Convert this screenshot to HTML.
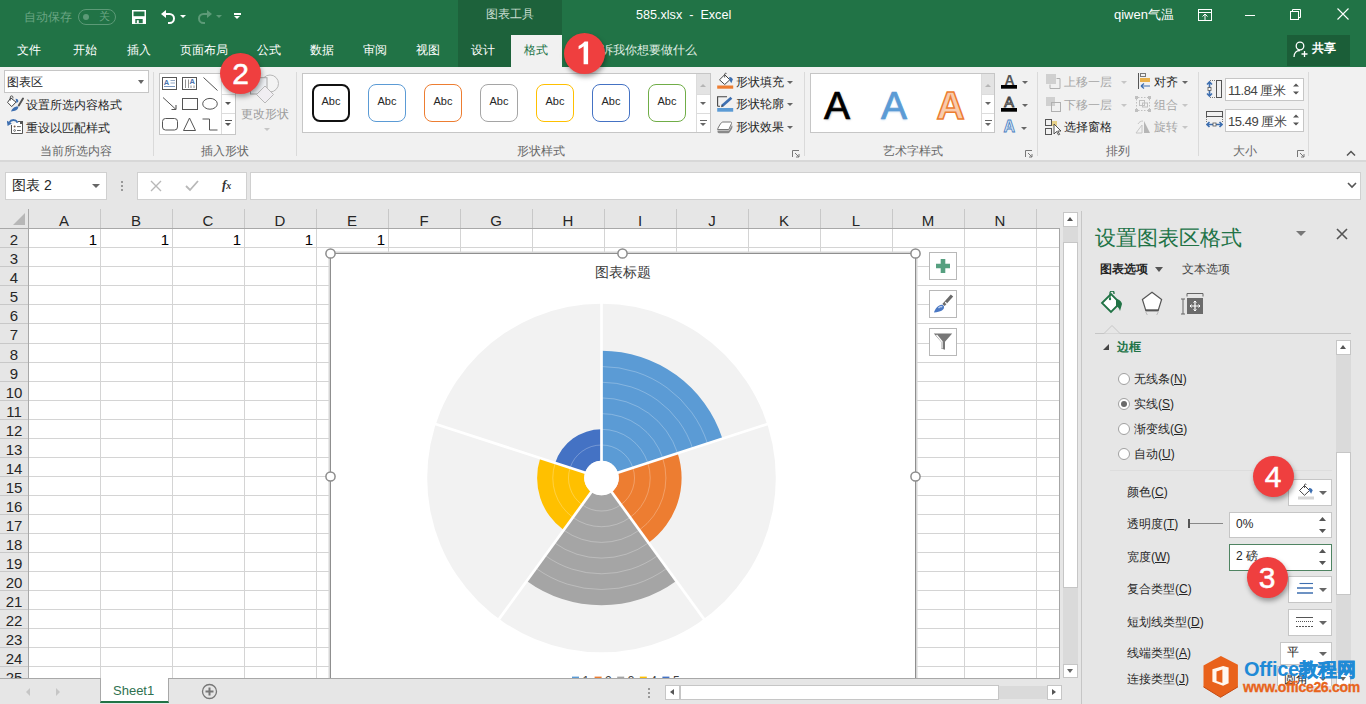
<!DOCTYPE html><html><head><meta charset="utf-8"><style>
*{margin:0;padding:0;box-sizing:border-box}
html,body{width:1366px;height:704px;overflow:hidden;background:#fff;font-family:"Liberation Sans",sans-serif;color:#262626}
.abs{position:absolute}
.t{position:absolute;white-space:nowrap;line-height:1}
#title{left:0;top:0;width:1366px;height:67px;background:#217346}
.tab{position:absolute;top:43px;font-size:12px;color:#fff;line-height:14px}
.rib{position:absolute;left:0;top:67px;width:1366px;height:95px;background:#f1f1f1;border-bottom:2px solid #d8d8d8}
.gl{position:absolute;top:144px;font-size:12px;color:#666;line-height:14px}
.sep{position:absolute;top:72px;width:1px;height:84px;background:#dadada}
.box{position:absolute;background:#fff;border:1px solid #c6c6c6}
.sw{position:absolute;top:84px;width:38px;height:38px;border:1.2px solid #222;border-radius:8px;font-size:11px;line-height:33px;text-align:center;color:#262626}
.rt{position:absolute;font-size:12px;color:#262626;line-height:14px}
.dis{color:#a6a6a6}
.caret{position:absolute;width:0;height:0;border-left:3.5px solid transparent;border-right:3.5px solid transparent;border-top:3.5px solid #666}
.rn{position:absolute;left:0;width:28px;text-align:center;font-size:15px;color:#262626;line-height:19px;padding-top:2px}
.cn{position:absolute;top:212px;width:72px;text-align:center;font-size:15px;color:#262626;line-height:17px}
.badge{position:absolute;width:41px;height:41px;border-radius:50%;background:#ef3f3f;color:#fff;font-size:30px;line-height:41px;text-align:center;-webkit-text-stroke:0.5px #fff;box-shadow:1px 3px 5px rgba(0,0,0,.35)}
.pt{position:absolute;font-size:12px;color:#262626;line-height:14px}
.radio{position:absolute;width:12px;height:12px;border-radius:50%;border:1px solid #a0a0a0;background:#fff}
.pbtn{position:absolute;background:#fff;border:1px solid #c6c6c6}
</style></head><body>
<div id="title" class="abs"></div>
<div class="abs" style="left:458px;top:0;width:104px;height:67px;background:#1d623b"></div>
<div class="t" style="left:24px;top:11px;font-size:12px;color:#6aa583">自动保存</div>
<div class="abs" style="left:78px;top:9px;width:38px;height:16px;border:1px solid #5c9a77;border-radius:8px"></div>
<div class="abs" style="left:83px;top:14px;width:6px;height:6px;border-radius:50%;background:#5c9a77"></div>
<div class="t" style="left:99px;top:11px;font-size:11px;color:#6aa583">关</div>
<svg class="abs" style="left:132px;top:10px" width="14" height="14" viewBox="0 0 14 14"><rect x="0.75" y="0.75" width="12.5" height="12.5" fill="none" stroke="#fff" stroke-width="1.5"/><rect x="1" y="6.2" width="12" height="7" fill="#fff"/><rect x="3.3" y="9" width="7.4" height="4.2" fill="#217346"/><rect x="4.8" y="10.2" width="2" height="3" fill="#fff"/></svg>
<svg class="abs" style="left:160px;top:9px" width="18" height="16" viewBox="0 0 18 16"><path d="M3 5h6.5a4.5 4.5 0 0 1 0 9H8" stroke="#fff" stroke-width="2" fill="none"/><path d="M1 5l5-4v8z" fill="#fff"/></svg>
<div class="caret" style="left:180px;top:15px;border-top-color:#fff"></div>
<svg class="abs" style="left:195px;top:9px" width="18" height="16" viewBox="0 0 18 16"><path d="M15 5H8.5a4.5 4.5 0 0 0 0 9H10" stroke="#5c9a77" stroke-width="2" fill="none"/><path d="M17 5l-5-4v8z" fill="#5c9a77"/></svg>
<div class="caret" style="left:216px;top:15px;border-top-color:#5c9a77"></div>
<div class="abs" style="left:234px;top:13px;width:7px;height:1.5px;background:#fff"></div>
<div class="caret" style="left:234px;top:16px;border-top-color:#fff"></div>
<div class="t" style="left:486px;top:8px;font-size:12px;color:#c8ddd0">图表工具</div>
<div class="t" style="left:636px;top:8.5px;font-size:12.6px;color:#fff">585.xlsx&nbsp; - &nbsp;Excel</div>
<div class="t" style="left:1114px;top:8px;font-size:13px;color:#fff">qiwen气温</div>
<svg class="abs" style="left:1197px;top:8px" width="16" height="14" viewBox="0 0 16 14"><rect x="1.5" y="1.5" width="13" height="11" fill="none" stroke="#fff"/><path d="M1.5 4.5h13" stroke="#fff"/><path d="M8 12V6M5.5 8.5L8 6l2.5 2.5" stroke="#fff" fill="none"/></svg>
<div class="abs" style="left:1245px;top:15px;width:10px;height:1px;background:#fff"></div>
<svg class="abs" style="left:1290px;top:9px" width="12" height="12" viewBox="0 0 12 12"><rect x="0.5" y="2.5" width="8" height="8" fill="none" stroke="#fff"/><path d="M2.5 2.5v-2h8v8h-2" fill="none" stroke="#fff"/></svg>
<svg class="abs" style="left:1337px;top:8px" width="12" height="12" viewBox="0 0 12 12"><path d="M0.5 0.5l11 11M11.5 0.5l-11 11" stroke="#fff" stroke-width="1.1"/></svg>
<div class="tab" style="left:17px">文件</div>
<div class="tab" style="left:73px">开始</div>
<div class="tab" style="left:127px">插入</div>
<div class="tab" style="left:180px">页面布局</div>
<div class="tab" style="left:257px">公式</div>
<div class="tab" style="left:310px">数据</div>
<div class="tab" style="left:363px">审阅</div>
<div class="tab" style="left:416px">视图</div>
<div class="tab" style="left:471px">设计</div>
<div class="abs" style="left:511px;top:35px;width:51px;height:33px;background:#f1f1f1"></div>
<div class="tab" style="left:524px;color:#217346">格式</div>
<div class="tab" style="left:589px;color:#e0efe5">告诉我你想要做什么</div>
<div class="abs" style="left:1287px;top:35px;width:63px;height:31px;background:#1b5e38"></div>
<svg class="abs" style="left:1293px;top:41px" width="16" height="17" viewBox="0 0 16 17"><circle cx="7" cy="5" r="3.8" fill="none" stroke="#fff" stroke-width="1.3"/><path d="M1 16c0-4 2.5-6.5 6-6.5" fill="none" stroke="#fff" stroke-width="1.3"/><path d="M11.5 10v6M8.5 13h6" stroke="#fff" stroke-width="1.3"/></svg>
<div class="t" style="left:1312px;top:42px;font-size:12px;color:#fff;font-weight:bold">共享</div>
<div class="rib"></div>
<div class="box" style="left:4px;top:70px;width:145px;height:23px"></div>
<div class="t" style="left:7px;top:76px;font-size:12px;color:#262626">图表区</div>
<div class="caret" style="left:138px;top:80px;border-left-width:3.5px;border-right-width:3.5px;border-top-width:4px"></div>
<svg class="abs" style="left:7px;top:95px" width="17" height="18" viewBox="0 0 17 18"><path d="M0.6 7.4L3.7 2.9 9 7.1 4.7 11.6z" fill="#fff" stroke="#444" stroke-width="1"/><path d="M3.3 5.5V2.2a1.3 1.3 0 0 1 2.6 0v1.2" stroke="#444" fill="none" stroke-width="0.9"/><path d="M8.6 3.8c1.6-.2 3 1 2.6 2.6L9.6 8.3z" fill="#3e6fb0"/><path d="M16 3.5L11.8 10.5" stroke="#555" stroke-width="1.9" stroke-linecap="round"/><path d="M4 16.5C5 13.5 8 11 11.2 11.6c.6 1.6-1 3.4-3.2 4.1z" fill="#3e6fb0"/></svg>
<div class="rt" style="left:26px;top:98px">设置所选内容格式</div>
<svg class="abs" style="left:7px;top:118px" width="17" height="17" viewBox="0 0 17 17"><path d="M4.5 7v8.5h11v-12H11" fill="#fff" stroke="#555"/><rect x="13" y="3" width="3" height="3" fill="#555"/><circle cx="7.6" cy="8.6" r="1" fill="#7a5a48"/><path d="M10 8.6h3.8M10 12.5h3.8" stroke="#555" stroke-width="0.9"/><circle cx="7.6" cy="12.5" r="0.9" fill="none" stroke="#555" stroke-width="0.8"/><path d="M10.5 4.8C9.5 1.5 4.5 0.8 2.2 4.6" stroke="#3e6fb0" stroke-width="1.8" fill="none"/><path d="M-0.2 2.6L0.6 8 4.8 5.4z" fill="#3e6fb0"/></svg>
<div class="rt" style="left:26px;top:121px">重设以匹配样式</div>
<div class="gl" style="left:40px">当前所选内容</div>
<div class="sep" style="left:153px"></div>
<div class="box" style="left:159px;top:73px;width:77px;height:62px;border-color:#c6c6c6"></div>
<div class="abs" style="left:221px;top:74px;width:1px;height:60px;background:#dcdcdc"></div>
<div class="abs" style="left:222px;top:94px;width:13px;height:1px;background:#dcdcdc"></div>
<div class="abs" style="left:222px;top:113px;width:13px;height:1px;background:#dcdcdc"></div>
<svg class="abs" style="left:160px;top:74px" width="61" height="60" viewBox="0 0 61 60">
<rect x="2.5" y="3.5" width="14" height="12" fill="#fff" stroke="#555"/><text x="3.8" y="11" font-size="7.5" font-weight="bold" fill="#4a73b0" font-family="Liberation Sans">A</text><path d="M10.5 6.5h4.5M10.5 9h4.5" stroke="#8aa0c0" stroke-width="0.9"/><path d="M4 12.5h11" stroke="#6a8ab8" stroke-width="0.9"/>
<rect x="22.5" y="3.5" width="14" height="12" fill="#fff" stroke="#555"/><path d="M25.5 5.5v8.5M28.5 5.5v8.5" stroke="#777" stroke-width="0.8"/><text x="29.5" y="10" font-size="7.5" font-weight="bold" fill="#4a73b0" font-family="Liberation Sans">A</text><path d="M31 11.5v2.5M34 11.5v2.5" stroke="#777" stroke-width="0.8"/>
<path d="M43.5 3.5l14 13" stroke="#555"/>
<path d="M3 23.5l13 12" stroke="#555"/><path d="M16 35.5h-4.5M16 35.5v-4.5" stroke="#555" stroke-width="1.1"/>
<rect x="22.5" y="24.5" width="15" height="11" fill="none" stroke="#555"/>
<ellipse cx="50" cy="29.8" rx="7.3" ry="5.4" fill="none" stroke="#555"/>
<rect x="2.5" y="44.5" width="15" height="11.5" rx="3" fill="none" stroke="#555"/>
<path d="M29.5 44l-6 12.5h12z" fill="none" stroke="#555"/>
<path d="M42.5 45h7v11h8" fill="none" stroke="#555"/>
</svg>
<div class="caret" style="left:225px;top:102px;border-top-color:#555"></div>
<div class="abs" style="left:225px;top:120px;width:7px;height:1px;background:#555"></div>
<div class="caret" style="left:225px;top:123px;border-top-color:#555"></div>
<svg class="abs" style="left:249px;top:72px" width="32" height="33" viewBox="0 0 32 33"><circle cx="21" cy="11.5" r="8.5" fill="#f3f3f3" stroke="#b8b8b8" stroke-width="1"/><rect x="1.5" y="5.7" width="16.5" height="16.3" fill="#eef0f4" stroke="#a8a8a8" stroke-width="1"/><path d="M16 14l8.5 8.5L16 31l-8.5-8.5z" fill="#f1eef2" stroke="#b8b8b8" stroke-width="1"/></svg>
<div class="t" style="left:241px;top:108px;font-size:12px;color:#9c9c9c">更改形状</div>
<div class="caret" style="left:264px;top:128px;border-top-color:#c6c6c6"></div>
<div class="gl" style="left:201px">插入形状</div>
<div class="sep" style="left:296px"></div>
<div class="box" style="left:302px;top:73px;width:409px;height:60px"></div>
<div class="abs" style="left:696px;top:74px;width:1px;height:58px;background:#dcdcdc"></div>
<div class="abs" style="left:697px;top:74px;width:13px;height:20px;background:#e3e3e3"></div>
<div class="abs" style="left:697px;top:94px;width:13px;height:1px;background:#dcdcdc"></div>
<div class="abs" style="left:697px;top:113px;width:13px;height:1px;background:#dcdcdc"></div>
<div class="caret" style="left:700px;top:84px;border-top:none;border-bottom:3.5px solid #b5b5b5"></div>
<div class="caret" style="left:700px;top:102px"></div>
<div class="abs" style="left:700px;top:120px;width:7px;height:1px;background:#666"></div>
<div class="caret" style="left:700px;top:123px"></div>
<div class="sw" style="left:312px;border-color:#111;border-width:2px;line-height:31px">Abc</div>
<div class="sw" style="left:368px;border-color:#5b9bd5;border-width:1px;line-height:33px">Abc</div>
<div class="sw" style="left:424px;border-color:#ed7d31;border-width:1px;line-height:33px">Abc</div>
<div class="sw" style="left:480px;border-color:#a5a5a5;border-width:1px;line-height:33px">Abc</div>
<div class="sw" style="left:536px;border-color:#ffc000;border-width:1px;line-height:33px">Abc</div>
<div class="sw" style="left:592px;border-color:#4472c4;border-width:1px;line-height:33px">Abc</div>
<div class="sw" style="left:648px;border-color:#70ad47;border-width:1px;line-height:33px">Abc</div>
<svg class="abs" style="left:716px;top:72px" width="18" height="17" viewBox="0 0 18 17"><path d="M3.5 7.8L8.7 2.7 13.8 7.8 8.7 12.5z" fill="#fff" stroke="#444"/><path d="M8.7 5.5V2.2a1 1 0 0 1 1.9-.4" stroke="#444" fill="none" stroke-width="0.9"/><path d="M13.2 5.2c1.6-.4 3.2.8 3.6 2.4l-1.5 3.6-1.9-3.2z" fill="#3e6fb0"/><rect x="1.2" y="13.5" width="16" height="3.2" fill="#ed7d31"/></svg>
<div class="rt" style="left:736px;top:75px">形状填充</div>
<div class="caret" style="left:787px;top:81px"></div>
<svg class="abs" style="left:716px;top:94px" width="18" height="18" viewBox="0 0 18 18"><path d="M1.6 12.3V2.7h9.4M1.6 12.3h2.4" stroke="#444" stroke-width="1.1" fill="none"/><path d="M6 12L15.4 3.8" stroke="#3e6fb0" stroke-width="2.8"/><path d="M5 13.2l.8-2.2 1.4 1.3z" fill="#333"/><rect x="1.2" y="14" width="16" height="3.7" fill="#5b9bd5"/></svg>
<div class="rt" style="left:736px;top:97px">形状轮廓</div>
<div class="caret" style="left:787px;top:103px"></div>
<svg class="abs" style="left:716px;top:118px" width="18" height="16" viewBox="0 0 18 16"><path d="M1.5 12.5h11.5l3-5.5c.6 1.2.6 2.5 0 3.7l-2.5 3.8c-.3.5-.8.8-1.3.8H3c-1 0-1.5-.8-1.5-1.5z" fill="#8a8a8a"/><path d="M1.5 11.5c0-.8 3-6.2 4-6.9.5-.4 1-.6 1.5-.6h7.5c1 0 1.3.7 1 1.5l-2.7 6H2z" fill="#fff" stroke="#777"/></svg>
<div class="rt" style="left:736px;top:120px">形状效果</div>
<div class="caret" style="left:787px;top:126px"></div>
<div class="gl" style="left:517px">形状样式</div>
<svg class="abs" style="left:792px;top:150px" width="8" height="8" viewBox="0 0 8 8"><path d="M0.5 7V0.5H7" fill="none" stroke="#777"/><path d="M3 3l4 4M7 4v3H4" fill="none" stroke="#777"/></svg>
<div class="sep" style="left:804px"></div>
<div class="box" style="left:810px;top:73px;width:185px;height:60px"></div>
<div class="abs" style="left:981px;top:74px;width:1px;height:58px;background:#dcdcdc"></div>
<div class="abs" style="left:982px;top:74px;width:12px;height:20px;background:#e3e3e3"></div>
<div class="abs" style="left:982px;top:94px;width:12px;height:1px;background:#dcdcdc"></div>
<div class="abs" style="left:982px;top:113px;width:12px;height:1px;background:#dcdcdc"></div>
<div class="caret" style="left:985px;top:84px;border-top:none;border-bottom:3.5px solid #b5b5b5"></div>
<div class="caret" style="left:985px;top:102px"></div>
<div class="abs" style="left:985px;top:120px;width:7px;height:1px;background:#666"></div>
<div class="caret" style="left:985px;top:123px"></div>
<div class="t" style="left:824px;top:86px;font-size:39px;color:#000;-webkit-text-stroke:0.7px #000;text-shadow:1px 1px 2px rgba(0,0,0,.25)">A</div>
<div class="t" style="left:881px;top:86px;font-size:39px;color:#5b9bd5;-webkit-text-stroke:0.7px #5b9bd5;text-shadow:0 1px 2px rgba(91,155,213,.4)">A</div>
<div class="t" style="left:936.5px;top:86px;font-size:39px;font-weight:bold;color:#f8cbad;-webkit-text-stroke:1.5px #ed7d31">A</div>
<svg class="abs" style="left:1000px;top:72px" width="20" height="64" viewBox="0 0 20 64"><text x="4.6" y="13.2" font-size="14" font-weight="bold" fill="#555" font-family="Liberation Sans">A</text><rect x="1" y="13" width="16" height="3.7" fill="#000"/><text x="4.2" y="34.6" font-size="14.5" fill="#fff" stroke="#444" stroke-width="1" font-family="Liberation Sans">A</text><rect x="1" y="36" width="16" height="3.7" fill="#000"/><text x="3.4" y="60.3" font-size="16" font-weight="bold" fill="#d8e8f6" stroke="#4a7fc1" stroke-width="0.8" font-family="Liberation Sans">A</text></svg>
<div class="caret" style="left:1022px;top:81px"></div>
<div class="caret" style="left:1022px;top:104px"></div>
<div class="caret" style="left:1021px;top:127px"></div>
<div class="gl" style="left:883px">艺术字样式</div>
<svg class="abs" style="left:1025px;top:150px" width="8" height="8" viewBox="0 0 8 8"><path d="M0.5 7V0.5H7" fill="none" stroke="#777"/><path d="M3 3l4 4M7 4v3H4" fill="none" stroke="#777"/></svg>
<div class="sep" style="left:1037px"></div>
<svg class="abs" style="left:1046px;top:74px" width="15" height="15" viewBox="0 0 15 15"><rect x="0" y="0" width="10" height="10" fill="#d0d0d0"/><path d="M4 10.5v4h10v-10h-3.5" fill="none" stroke="#b0b0b0"/></svg>
<div class="rt dis" style="left:1064px;top:75px">上移一层</div>
<div class="caret" style="left:1121px;top:81px;border-top-color:#c6c6c6"></div>
<svg class="abs" style="left:1046px;top:97px" width="15" height="15" viewBox="0 0 15 15"><rect x="0" y="0" width="9" height="9" fill="#d0d0d0"/><rect x="5.5" y="5.5" width="9" height="9" fill="none" stroke="#b0b0b0"/></svg>
<div class="rt dis" style="left:1064px;top:98px">下移一层</div>
<div class="caret" style="left:1121px;top:104px;border-top-color:#c6c6c6"></div>
<svg class="abs" style="left:1045px;top:119px" width="17" height="17" viewBox="0 0 17 17"><rect x="0.5" y="0.5" width="6" height="6" fill="none" stroke="#555"/><rect x="0.5" y="9.5" width="6" height="6" fill="none" stroke="#555"/><rect x="7" y="2" width="5" height="5" fill="#e8d28a"/><path d="M9 5v10l2.5-2.5 2 3.5 1.2-.7-2-3.3H16z" fill="#fff" stroke="#444" stroke-width="0.9"/></svg>
<div class="rt" style="left:1064px;top:120px">选择窗格</div>
<svg class="abs" style="left:1137px;top:73px" width="14" height="16" viewBox="0 0 14 16"><path d="M1.5 0v16" stroke="#555"/><rect x="3.5" y="0.5" width="5" height="3" fill="none" stroke="#777"/><rect x="3" y="5" width="10" height="4" fill="#e8b04a"/><path d="M4 13h9M4 13l3-2.5M4 13l3 2.5" fill="none" stroke="#3e6fb0" stroke-width="1.2"/></svg>
<div class="rt" style="left:1154px;top:75px">对齐</div>
<div class="caret" style="left:1182px;top:81px"></div>
<svg class="abs" style="left:1135px;top:96px" width="16" height="16" viewBox="0 0 16 16"><g fill="#c0c0c0"><rect x="0" y="0" width="3" height="3"/><rect x="13" y="0" width="3" height="3"/><rect x="0" y="13" width="3" height="3"/><rect x="13" y="13" width="3" height="3"/></g><path d="M1.5 3v10M14.5 3v10M3 1.5h10M3 14.5h10" stroke="#c0c0c0" stroke-dasharray="1.5 1.5"/><rect x="4.5" y="4.5" width="5" height="5" fill="none" stroke="#c0c0c0"/><rect x="7.5" y="7" width="5" height="4" fill="none" stroke="#c0c0c0"/></svg>
<div class="rt dis" style="left:1154px;top:98px">组合</div>
<div class="caret" style="left:1182px;top:104px;border-top-color:#c6c6c6"></div>
<svg class="abs" style="left:1135px;top:120px" width="16" height="14" viewBox="0 0 16 14"><path d="M1 13l6-8v8z" fill="none" stroke="#c6c6c6"/><path d="M9 1v12h6z" fill="#b5b5b5"/><path d="M3 4c1-2 3-3 5-3" fill="none" stroke="#c6c6c6"/></svg>
<div class="rt dis" style="left:1154px;top:120px">旋转</div>
<div class="caret" style="left:1182px;top:126px;border-top-color:#c6c6c6"></div>
<div class="gl" style="left:1106px">排列</div>
<div class="sep" style="left:1198px"></div>
<svg class="abs" style="left:1206px;top:80px" width="17" height="18" viewBox="0 0 17 18"><path d="M3.5 2v14M1 4.5L3.5 2 6 4.5M1 13.5L3.5 16 6 13.5" fill="none" stroke="#3e6fb0" stroke-width="1.6"/><rect x="2" y="7.5" width="3" height="3" fill="#fff" stroke="#555" stroke-width="0.8"/><path d="M4 0.5h5M4 17.5h5" stroke="#777" stroke-dasharray="1 1"/><rect x="10.5" y="0.5" width="5" height="17" fill="none" stroke="#555"/></svg>
<div class="box" style="left:1225px;top:78px;width:79px;height:23px"></div>
<div class="t" style="left:1228px;top:83.5px;font-size:13px;letter-spacing:-0.45px;color:#444">11.84 厘米</div>
<svg class="abs" style="left:1292px;top:82px" width="8" height="14" viewBox="0 0 8 14"><path d="M1 4.5L4 1.5 7 4.5zM1 9.5L4 12.5 7 9.5z" fill="#555"/></svg>
<svg class="abs" style="left:1206px;top:111px" width="17" height="17" viewBox="0 0 17 17"><rect x="0.5" y="0.5" width="16" height="5" fill="none" stroke="#555"/><path d="M0.5 6v5M16.5 6v5" stroke="#777" stroke-dasharray="1 1"/><path d="M1 13.5h15M3.5 11L1 13.5 3.5 16M13.5 11L16 13.5 13.5 16" fill="none" stroke="#3e6fb0" stroke-width="1.6"/><rect x="7" y="12" width="3" height="3" fill="#fff" stroke="#555" stroke-width="0.8"/></svg>
<div class="box" style="left:1225px;top:109px;width:79px;height:23px"></div>
<div class="t" style="left:1228px;top:114.5px;font-size:13px;letter-spacing:-0.45px;color:#444">15.49 厘米</div>
<svg class="abs" style="left:1292px;top:113px" width="8" height="14" viewBox="0 0 8 14"><path d="M1 4.5L4 1.5 7 4.5zM1 9.5L4 12.5 7 9.5z" fill="#555"/></svg>
<div class="gl" style="left:1233px">大小</div>
<svg class="abs" style="left:1297px;top:150px" width="8" height="8" viewBox="0 0 8 8"><path d="M0.5 7V0.5H7" fill="none" stroke="#777"/><path d="M3 3l4 4M7 4v3H4" fill="none" stroke="#777"/></svg>
<div class="sep" style="left:1308px"></div>
<svg class="abs" style="left:1346px;top:150px" width="10" height="6" viewBox="0 0 10 6"><path d="M1 5.5L5 1.5 9 5.5" fill="none" stroke="#555" stroke-width="1.5"/></svg>
<div class="abs" style="left:0;top:162px;width:1366px;height:516px;background:#e6e6e6"></div>
<div class="box" style="left:5px;top:172px;width:102px;height:28px;border-color:#d0d0d0"></div>
<div class="t" style="left:12px;top:178px;font-size:14px;color:#262626">图表 2</div>
<div class="caret" style="left:92px;top:184px;border-left-width:4px;border-right-width:4px;border-top-width:4px"></div>
<div class="abs" style="left:121px;top:181px;width:2px;height:2px;background:#999"></div><div class="abs" style="left:121px;top:185px;width:2px;height:2px;background:#999"></div><div class="abs" style="left:121px;top:189px;width:2px;height:2px;background:#999"></div>
<div class="box" style="left:137px;top:172px;width:110px;height:28px;border-color:#d0d0d0"></div>
<svg class="abs" style="left:150px;top:180px" width="12" height="12" viewBox="0 0 12 12"><path d="M1 1l10 10M11 1L1 11" stroke="#b8b8b8" stroke-width="1.4"/></svg>
<svg class="abs" style="left:185px;top:180px" width="14" height="12" viewBox="0 0 14 12"><path d="M1 6l4 4 8-9" fill="none" stroke="#b8b8b8" stroke-width="1.8"/></svg>
<div class="t" style="left:222px;top:178px;font-size:13px;color:#333;font-family:'Liberation Serif',serif;font-style:italic;font-weight:bold">f<span style="font-size:10px">x</span></div>
<div class="box" style="left:250px;top:172px;width:1111px;height:28px;border-color:#d0d0d0"></div>
<svg class="abs" style="left:1347px;top:182px" width="10" height="7" viewBox="0 0 10 7"><path d="M1 1l4 4 4-4" fill="none" stroke="#555" stroke-width="1.6"/></svg>
<div class="abs" style="left:29px;top:229px;width:1031px;height:449px;background:#fff"></div>
<div class="abs" style="left:0;top:228px;width:1060px;height:1px;background:#a8a8a8"></div>
<div class="abs" style="left:28px;top:209px;width:1px;height:469px;background:#a8a8a8"></div>
<div class="abs" style="left:100px;top:209px;width:1px;height:19px;background:#c8c8c8"></div><div class="abs" style="left:100px;top:229px;width:1px;height:449px;background:#d4d4d4"></div><div class="abs" style="left:172px;top:209px;width:1px;height:19px;background:#c8c8c8"></div><div class="abs" style="left:172px;top:229px;width:1px;height:449px;background:#d4d4d4"></div><div class="abs" style="left:244px;top:209px;width:1px;height:19px;background:#c8c8c8"></div><div class="abs" style="left:244px;top:229px;width:1px;height:449px;background:#d4d4d4"></div><div class="abs" style="left:316px;top:209px;width:1px;height:19px;background:#c8c8c8"></div><div class="abs" style="left:316px;top:229px;width:1px;height:449px;background:#d4d4d4"></div><div class="abs" style="left:388px;top:209px;width:1px;height:19px;background:#c8c8c8"></div><div class="abs" style="left:388px;top:229px;width:1px;height:449px;background:#d4d4d4"></div><div class="abs" style="left:460px;top:209px;width:1px;height:19px;background:#c8c8c8"></div><div class="abs" style="left:460px;top:229px;width:1px;height:449px;background:#d4d4d4"></div><div class="abs" style="left:532px;top:209px;width:1px;height:19px;background:#c8c8c8"></div><div class="abs" style="left:532px;top:229px;width:1px;height:449px;background:#d4d4d4"></div><div class="abs" style="left:604px;top:209px;width:1px;height:19px;background:#c8c8c8"></div><div class="abs" style="left:604px;top:229px;width:1px;height:449px;background:#d4d4d4"></div><div class="abs" style="left:676px;top:209px;width:1px;height:19px;background:#c8c8c8"></div><div class="abs" style="left:676px;top:229px;width:1px;height:449px;background:#d4d4d4"></div><div class="abs" style="left:748px;top:209px;width:1px;height:19px;background:#c8c8c8"></div><div class="abs" style="left:748px;top:229px;width:1px;height:449px;background:#d4d4d4"></div><div class="abs" style="left:820px;top:209px;width:1px;height:19px;background:#c8c8c8"></div><div class="abs" style="left:820px;top:229px;width:1px;height:449px;background:#d4d4d4"></div><div class="abs" style="left:892px;top:209px;width:1px;height:19px;background:#c8c8c8"></div><div class="abs" style="left:892px;top:229px;width:1px;height:449px;background:#d4d4d4"></div><div class="abs" style="left:964px;top:209px;width:1px;height:19px;background:#c8c8c8"></div><div class="abs" style="left:964px;top:229px;width:1px;height:449px;background:#d4d4d4"></div><div class="abs" style="left:1036px;top:209px;width:1px;height:19px;background:#c8c8c8"></div><div class="abs" style="left:1036px;top:229px;width:1px;height:449px;background:#d4d4d4"></div><div class="abs" style="left:29px;top:247px;width:1031px;height:1px;background:#d4d4d4"></div><div class="abs" style="left:0;top:247px;width:28px;height:1px;background:#c8c8c8"></div><div class="abs" style="left:29px;top:266px;width:1031px;height:1px;background:#d4d4d4"></div><div class="abs" style="left:0;top:266px;width:28px;height:1px;background:#c8c8c8"></div><div class="abs" style="left:29px;top:285px;width:1031px;height:1px;background:#d4d4d4"></div><div class="abs" style="left:0;top:285px;width:28px;height:1px;background:#c8c8c8"></div><div class="abs" style="left:29px;top:304px;width:1031px;height:1px;background:#d4d4d4"></div><div class="abs" style="left:0;top:304px;width:28px;height:1px;background:#c8c8c8"></div><div class="abs" style="left:29px;top:323px;width:1031px;height:1px;background:#d4d4d4"></div><div class="abs" style="left:0;top:323px;width:28px;height:1px;background:#c8c8c8"></div><div class="abs" style="left:29px;top:343px;width:1031px;height:1px;background:#d4d4d4"></div><div class="abs" style="left:0;top:343px;width:28px;height:1px;background:#c8c8c8"></div><div class="abs" style="left:29px;top:362px;width:1031px;height:1px;background:#d4d4d4"></div><div class="abs" style="left:0;top:362px;width:28px;height:1px;background:#c8c8c8"></div><div class="abs" style="left:29px;top:381px;width:1031px;height:1px;background:#d4d4d4"></div><div class="abs" style="left:0;top:381px;width:28px;height:1px;background:#c8c8c8"></div><div class="abs" style="left:29px;top:400px;width:1031px;height:1px;background:#d4d4d4"></div><div class="abs" style="left:0;top:400px;width:28px;height:1px;background:#c8c8c8"></div><div class="abs" style="left:29px;top:419px;width:1031px;height:1px;background:#d4d4d4"></div><div class="abs" style="left:0;top:419px;width:28px;height:1px;background:#c8c8c8"></div><div class="abs" style="left:29px;top:438px;width:1031px;height:1px;background:#d4d4d4"></div><div class="abs" style="left:0;top:438px;width:28px;height:1px;background:#c8c8c8"></div><div class="abs" style="left:29px;top:457px;width:1031px;height:1px;background:#d4d4d4"></div><div class="abs" style="left:0;top:457px;width:28px;height:1px;background:#c8c8c8"></div><div class="abs" style="left:29px;top:476px;width:1031px;height:1px;background:#d4d4d4"></div><div class="abs" style="left:0;top:476px;width:28px;height:1px;background:#c8c8c8"></div><div class="abs" style="left:29px;top:495px;width:1031px;height:1px;background:#d4d4d4"></div><div class="abs" style="left:0;top:495px;width:28px;height:1px;background:#c8c8c8"></div><div class="abs" style="left:29px;top:514px;width:1031px;height:1px;background:#d4d4d4"></div><div class="abs" style="left:0;top:514px;width:28px;height:1px;background:#c8c8c8"></div><div class="abs" style="left:29px;top:533px;width:1031px;height:1px;background:#d4d4d4"></div><div class="abs" style="left:0;top:533px;width:28px;height:1px;background:#c8c8c8"></div><div class="abs" style="left:29px;top:552px;width:1031px;height:1px;background:#d4d4d4"></div><div class="abs" style="left:0;top:552px;width:28px;height:1px;background:#c8c8c8"></div><div class="abs" style="left:29px;top:571px;width:1031px;height:1px;background:#d4d4d4"></div><div class="abs" style="left:0;top:571px;width:28px;height:1px;background:#c8c8c8"></div><div class="abs" style="left:29px;top:590px;width:1031px;height:1px;background:#d4d4d4"></div><div class="abs" style="left:0;top:590px;width:28px;height:1px;background:#c8c8c8"></div><div class="abs" style="left:29px;top:609px;width:1031px;height:1px;background:#d4d4d4"></div><div class="abs" style="left:0;top:609px;width:28px;height:1px;background:#c8c8c8"></div><div class="abs" style="left:29px;top:628px;width:1031px;height:1px;background:#d4d4d4"></div><div class="abs" style="left:0;top:628px;width:28px;height:1px;background:#c8c8c8"></div><div class="abs" style="left:29px;top:647px;width:1031px;height:1px;background:#d4d4d4"></div><div class="abs" style="left:0;top:647px;width:28px;height:1px;background:#c8c8c8"></div><div class="abs" style="left:29px;top:666px;width:1031px;height:1px;background:#d4d4d4"></div><div class="abs" style="left:0;top:666px;width:28px;height:1px;background:#c8c8c8"></div><div class="abs" style="left:29px;top:685px;width:1031px;height:1px;background:#d4d4d4"></div><div class="abs" style="left:0;top:685px;width:28px;height:1px;background:#c8c8c8"></div>
<div class="abs" style="left:1059px;top:229px;width:1px;height:450px;background:#a6a6a6"></div>
<svg class="abs" style="left:13px;top:213px" width="12" height="12" viewBox="0 0 12 12"><path d="M12 0v12H0z" fill="#b7b7b7"/></svg>
<div class="cn" style="left:28px">A</div>
<div class="cn" style="left:100px">B</div>
<div class="cn" style="left:172px">C</div>
<div class="cn" style="left:244px">D</div>
<div class="cn" style="left:316px">E</div>
<div class="cn" style="left:388px">F</div>
<div class="cn" style="left:460px">G</div>
<div class="cn" style="left:532px">H</div>
<div class="cn" style="left:604px">I</div>
<div class="cn" style="left:676px">J</div>
<div class="cn" style="left:748px">K</div>
<div class="cn" style="left:820px">L</div>
<div class="cn" style="left:892px">M</div>
<div class="cn" style="left:964px">N</div>
<div class="rn" style="top:228px">2</div>
<div class="rn" style="top:247px">3</div>
<div class="rn" style="top:266px">4</div>
<div class="rn" style="top:285px">5</div>
<div class="rn" style="top:304px">6</div>
<div class="rn" style="top:323px">7</div>
<div class="rn" style="top:343px">8</div>
<div class="rn" style="top:362px">9</div>
<div class="rn" style="top:381px">10</div>
<div class="rn" style="top:400px">11</div>
<div class="rn" style="top:419px">12</div>
<div class="rn" style="top:438px">13</div>
<div class="rn" style="top:457px">14</div>
<div class="rn" style="top:476px">15</div>
<div class="rn" style="top:495px">16</div>
<div class="rn" style="top:514px">17</div>
<div class="rn" style="top:533px">18</div>
<div class="rn" style="top:552px">19</div>
<div class="rn" style="top:571px">20</div>
<div class="rn" style="top:590px">21</div>
<div class="rn" style="top:609px">22</div>
<div class="rn" style="top:628px">23</div>
<div class="rn" style="top:647px">24</div>
<div class="rn" style="top:666px">25</div>
<div class="t" style="left:28px;top:232px;width:69px;text-align:right;font-size:15px;color:#000">1</div>
<div class="t" style="left:100px;top:232px;width:69px;text-align:right;font-size:15px;color:#000">1</div>
<div class="t" style="left:172px;top:232px;width:69px;text-align:right;font-size:15px;color:#000">1</div>
<div class="t" style="left:244px;top:232px;width:69px;text-align:right;font-size:15px;color:#000">1</div>
<div class="t" style="left:316px;top:232px;width:69px;text-align:right;font-size:15px;color:#000">1</div>
<div class="abs" style="left:330px;top:253px;width:586px;height:425px;background:#fff;border:1.5px solid #8f8f8f;border-bottom:none;box-shadow:0 0 0 1.5px #d6d6d6"></div>
<div class="t" style="left:595px;top:265px;font-size:14px;color:#3a3a3a">图表标题</div>
<svg class="abs" style="left:0;top:0" width="1366" height="704" viewBox="0 0 1366 704"><circle cx="601.5" cy="478.0" r="174.30" fill="#f2f2f2"/><path d="M601.50 350.80A127.19999999999999 127.19999999999999 0 0 1 722.47 438.69L617.95 472.65A17.3 17.3 0 0 0 601.50 460.70Z" fill="#5b9bd5"/><path d="M601.50 445.00A33.00 33.00 0 0 1 632.88 467.80" fill="none" stroke="#fff" stroke-opacity="0.35" stroke-width="0.75"/><path d="M601.50 429.30A48.70 48.70 0 0 1 647.82 462.95" fill="none" stroke="#fff" stroke-opacity="0.35" stroke-width="0.75"/><path d="M601.50 413.60A64.40 64.40 0 0 1 662.75 458.10" fill="none" stroke="#fff" stroke-opacity="0.35" stroke-width="0.75"/><path d="M601.50 397.90A80.10 80.10 0 0 1 677.68 453.25" fill="none" stroke="#fff" stroke-opacity="0.35" stroke-width="0.75"/><path d="M601.50 382.20A95.80 95.80 0 0 1 692.61 448.40" fill="none" stroke="#fff" stroke-opacity="0.35" stroke-width="0.75"/><path d="M601.50 366.50A111.50 111.50 0 0 1 707.54 443.54" fill="none" stroke="#fff" stroke-opacity="0.35" stroke-width="0.75"/><path d="M677.68 453.25A80.1 80.1 0 0 1 648.58 542.80L611.67 492.00A17.3 17.3 0 0 0 617.95 472.65Z" fill="#ed7d31"/><path d="M632.88 467.80A33.00 33.00 0 0 1 620.90 504.70" fill="none" stroke="#fff" stroke-opacity="0.35" stroke-width="0.75"/><path d="M647.82 462.95A48.70 48.70 0 0 1 630.13 517.40" fill="none" stroke="#fff" stroke-opacity="0.35" stroke-width="0.75"/><path d="M662.75 458.10A64.40 64.40 0 0 1 639.35 530.10" fill="none" stroke="#fff" stroke-opacity="0.35" stroke-width="0.75"/><path d="M676.27 580.91A127.19999999999999 127.19999999999999 0 0 1 526.73 580.91L591.33 492.00A17.3 17.3 0 0 0 611.67 492.00Z" fill="#a5a5a5"/><path d="M620.90 504.70A33.00 33.00 0 0 1 582.10 504.70" fill="none" stroke="#fff" stroke-opacity="0.35" stroke-width="0.75"/><path d="M630.13 517.40A48.70 48.70 0 0 1 572.87 517.40" fill="none" stroke="#fff" stroke-opacity="0.35" stroke-width="0.75"/><path d="M639.35 530.10A64.40 64.40 0 0 1 563.65 530.10" fill="none" stroke="#fff" stroke-opacity="0.35" stroke-width="0.75"/><path d="M648.58 542.80A80.10 80.10 0 0 1 554.42 542.80" fill="none" stroke="#fff" stroke-opacity="0.35" stroke-width="0.75"/><path d="M657.81 555.50A95.80 95.80 0 0 1 545.19 555.50" fill="none" stroke="#fff" stroke-opacity="0.35" stroke-width="0.75"/><path d="M667.04 568.21A111.50 111.50 0 0 1 535.96 568.21" fill="none" stroke="#fff" stroke-opacity="0.35" stroke-width="0.75"/><path d="M563.65 530.10A64.39999999999999 64.39999999999999 0 0 1 540.25 458.10L585.05 472.65A17.3 17.3 0 0 0 591.33 492.00Z" fill="#ffc000"/><path d="M582.10 504.70A33.00 33.00 0 0 1 570.12 467.80" fill="none" stroke="#fff" stroke-opacity="0.35" stroke-width="0.75"/><path d="M572.87 517.40A48.70 48.70 0 0 1 555.18 462.95" fill="none" stroke="#fff" stroke-opacity="0.35" stroke-width="0.75"/><path d="M555.18 462.95A48.7 48.7 0 0 1 601.50 429.30L601.50 460.70A17.3 17.3 0 0 0 585.05 472.65Z" fill="#4472c4"/><path d="M570.12 467.80A33.00 33.00 0 0 1 601.50 445.00" fill="none" stroke="#fff" stroke-opacity="0.35" stroke-width="0.75"/><path d="M601.5 478.0L601.50 301.70" stroke="#fff" stroke-width="2.7"/><path d="M601.5 478.0L769.17 423.52" stroke="#fff" stroke-width="2.7"/><path d="M601.5 478.0L705.13 620.63" stroke="#fff" stroke-width="2.7"/><path d="M601.5 478.0L497.87 620.63" stroke="#fff" stroke-width="2.7"/><path d="M601.5 478.0L433.83 423.52" stroke="#fff" stroke-width="2.7"/><circle cx="601.5" cy="478.0" r="17.3" fill="#fff"/><circle cx="330.5" cy="253.5" r="4.6" fill="#fff" stroke="#8c8c8c" stroke-width="1.5"/><circle cx="622.5" cy="253.5" r="4.6" fill="#fff" stroke="#8c8c8c" stroke-width="1.5"/><circle cx="915.5" cy="253.5" r="4.6" fill="#fff" stroke="#8c8c8c" stroke-width="1.5"/><circle cx="330.5" cy="476.5" r="4.6" fill="#fff" stroke="#8c8c8c" stroke-width="1.5"/><circle cx="915.5" cy="476.5" r="4.6" fill="#fff" stroke="#8c8c8c" stroke-width="1.5"/><rect x="572.0" y="676.6" width="7" height="7" fill="#5b9bd5"/><text x="582.5" y="684.6" font-size="12" fill="#404040" font-family="Liberation Sans">1</text><rect x="594.6" y="676.6" width="7" height="7" fill="#ed7d31"/><text x="605.1" y="684.6" font-size="12" fill="#404040" font-family="Liberation Sans">2</text><rect x="617.2" y="676.6" width="7" height="7" fill="#a5a5a5"/><text x="627.7" y="684.6" font-size="12" fill="#404040" font-family="Liberation Sans">3</text><rect x="639.8" y="676.6" width="7" height="7" fill="#ffc000"/><text x="650.3" y="684.6" font-size="12" fill="#404040" font-family="Liberation Sans">4</text><rect x="662.4" y="676.6" width="7" height="7" fill="#4472c4"/><text x="672.9" y="684.6" font-size="12" fill="#404040" font-family="Liberation Sans">5</text></svg>
<div class="pbtn" style="left:929px;top:252px;width:28px;height:28px;border-color:#b8b8b8"></div>
<svg class="abs" style="left:935px;top:258px" width="16" height="16" viewBox="0 0 16 16"><path d="M8 1v14M1 8h14" stroke="#56a080" stroke-width="4.6"/></svg>
<div class="pbtn" style="left:929px;top:290px;width:28px;height:28px;border-color:#b8b8b8"></div>
<svg class="abs" style="left:932px;top:293px" width="22" height="22" viewBox="0 0 22 22"><path d="M20 2.5L11.5 12" stroke="#6a6a6a" stroke-width="3.2"/><path d="M13.2 9.2l1.6 1.5" stroke="#fff" stroke-width="1.2"/><path d="M2 19.5c1-3 3-6.5 6.5-7.5 2-.5 3.8.5 3.5 2.5-.3 2.5-3 4.5-10 5z" fill="#4a78c4"/><path d="M6.5 15c1-1.2 2.5-1.6 3.8-1.1" stroke="#c9d8ef" stroke-width="1.3" fill="none"/></svg>
<div class="pbtn" style="left:929px;top:328px;width:28px;height:28px;border-color:#b8b8b8"></div>
<svg class="abs" style="left:933px;top:332px" width="20" height="20" viewBox="0 0 20 20"><path d="M0.8 1.5h18.4l-7.2 8.2v8l-4-1.2v-6.8z" fill="#777"/><path d="M3.5 3l5.5 6.5v7" stroke="#fff" stroke-width="1.3" fill="none"/></svg>
<div class="abs" style="left:1060px;top:209px;width:22px;height:469px;background:#e6e6e6"></div>
<div class="box" style="left:1063px;top:212px;width:15px;height:15px;border-color:#c6c6c6"></div>
<div class="caret" style="left:1067px;top:217px;border-top:none;border-bottom:4px solid #555;border-left-width:3.5px;border-right-width:3.5px"></div>
<div class="abs" style="left:1063px;top:227px;width:15px;height:15px;background:#dadada"></div>
<div class="box" style="left:1063px;top:242px;width:15px;height:346px;border-color:#c6c6c6"></div>
<div class="abs" style="left:1063px;top:588px;width:15px;height:77px;background:#dadada"></div>
<div class="box" style="left:1063px;top:664px;width:15px;height:14px;border-color:#c6c6c6"></div>
<div class="caret" style="left:1067px;top:669px;border-top-width:4px"></div>
<div class="abs" style="left:1081px;top:211px;width:1px;height:493px;background:#c6c6c6"></div>
<div class="abs" style="left:0;top:678px;width:1081px;height:26px;background:#e6e6e6"></div><div class="abs" style="left:0;top:678px;width:1060px;height:1px;background:#a8a8a8"></div>
<div class="caret" style="left:26px;top:688px;border:none;border-top:4px solid transparent;border-bottom:4px solid transparent;border-right:4px solid #c6c6c6"></div>
<div class="caret" style="left:56px;top:688px;border:none;border-top:4px solid transparent;border-bottom:4px solid transparent;border-left:4px solid #c6c6c6"></div>
<div class="abs" style="left:100px;top:678px;width:69px;height:25px;background:#fff;border-left:1px solid #a8a8a8;border-right:1px solid #a8a8a8;border-bottom:2px solid #217346"></div>
<div class="t" style="left:113px;top:684px;font-size:13px;color:#2f7150">Sheet1</div>
<svg class="abs" style="left:201px;top:683px" width="17" height="17" viewBox="0 0 17 17"><circle cx="8.5" cy="8.5" r="7" fill="none" stroke="#777" stroke-width="1.3"/><path d="M8.5 4.5v8M4.5 8.5h8" stroke="#777" stroke-width="2"/></svg>
<div class="abs" style="left:648px;top:688px;width:2px;height:2px;background:#999"></div><div class="abs" style="left:648px;top:692px;width:2px;height:2px;background:#999"></div><div class="abs" style="left:648px;top:696px;width:2px;height:2px;background:#999"></div>
<div class="box" style="left:665px;top:685px;width:15px;height:15px;border-color:#c6c6c6"></div>
<div class="caret" style="left:670px;top:689px;border:none;border-top:3.5px solid transparent;border-bottom:3.5px solid transparent;border-right:4px solid #555"></div>
<div class="box" style="left:680px;top:685px;width:319px;height:15px;border-color:#c6c6c6"></div>
<div class="abs" style="left:999px;top:686px;width:48px;height:13px;background:#dadada"></div>
<div class="box" style="left:1047px;top:685px;width:15px;height:15px;border-color:#c6c6c6"></div>
<div class="caret" style="left:1052px;top:689px;border:none;border-top:3.5px solid transparent;border-bottom:3.5px solid transparent;border-left:4px solid #555"></div>
<div class="abs" style="left:1082px;top:209px;width:284px;height:495px;background:#e6e6e6"></div>
<div class="t" style="left:1095px;top:227px;font-size:21px;color:#217346">设置图表区格式</div>
<div class="caret" style="left:1296px;top:231px;border-left-width:5px;border-right-width:5px;border-top-width:5px;border-top-color:#777"></div>
<svg class="abs" style="left:1336px;top:228px" width="12" height="12" viewBox="0 0 12 12"><path d="M1 1l10 10M11 1L1 11" stroke="#555" stroke-width="1.6"/></svg>
<div class="t" style="left:1100px;top:263px;font-size:12px;font-weight:bold;color:#262626">图表选项</div>
<div class="caret" style="left:1155px;top:267px;border-left-width:4.5px;border-right-width:4.5px;border-top-width:5px;border-top-color:#555"></div>
<div class="t" style="left:1182px;top:263px;font-size:12px;color:#444">文本选项</div>
<svg class="abs" style="left:1100px;top:291px" width="26" height="25" viewBox="0 0 26 25"><path d="M2 12l9-9 9 9-9 9z" fill="#fff" stroke="#217346" stroke-width="1.8"/><path d="M10 7V2a2 2 0 0 1 4 0v1" fill="none" stroke="#217346" stroke-width="1.3"/><circle cx="10" cy="8" r="1.2" fill="#217346"/><path d="M16 8c3 0 6 3 6 5l-2 7c-1-3-2-4-4-5z" fill="#217346"/></svg>
<svg class="abs" style="left:1141px;top:291px" width="23" height="25" viewBox="0 0 23 25"><path d="M11 1.3l9.6 7.1-3.4 11h-12.4L1.4 8.4z" fill="#fff" stroke="#555" stroke-width="1.2"/><path d="M4.8 19.4h12.4" stroke="#555" stroke-width="2"/><path d="M4.5 20.5l1.8 3.5M17.5 20.5l-1.8 3.5" stroke="#bbb" stroke-width="1"/></svg>
<svg class="abs" style="left:1180px;top:292px" width="24" height="24" viewBox="0 0 24 24"><path d="M7 1.5h16M7 1.5v3M23 1.5v3" fill="none" stroke="#666"/><path d="M1 7h4M3 7v15M1 22h4" fill="none" stroke="#666"/><rect x="7" y="6" width="16" height="16" fill="#6b6b6b"/><path d="M15 9v10M10 14h10" stroke="#fff" stroke-width="1.2"/><path d="M13.5 10.5L15 9l1.5 1.5M13.5 17.5L15 19l1.5-1.5M11.5 12.5L10 14l1.5 1.5M18.5 12.5L20 14l-1.5 1.5" fill="none" stroke="#fff"/></svg>
<div class="abs" style="left:1095px;top:333px;width:256px;height:1px;background:#c6c6c6"></div>
<svg class="abs" style="left:1104px;top:325px" width="16" height="9" viewBox="0 0 16 9"><path d="M0 8.5L8 0.5 16 8.5" fill="#e6e6e6" stroke="#c6c6c6"/></svg>
<svg class="abs" style="left:1102px;top:343px" width="8" height="8" viewBox="0 0 8 8"><path d="M7 1v6H1z" fill="#444"/></svg>
<div class="t" style="left:1117px;top:341px;font-size:12px;font-weight:bold;color:#217346">边框</div>
<div class="abs" style="left:1336px;top:340px;width:15px;height:364px;background:#dadada"></div>
<div class="box" style="left:1336px;top:340px;width:15px;height:15px;border-color:#c6c6c6"></div>
<div class="caret" style="left:1340px;top:345px;border-top:none;border-bottom:4px solid #555"></div>
<div class="box" style="left:1336px;top:452px;width:15px;height:143px;border-color:#c6c6c6"></div>
<div class="radio" style="left:1117.5px;top:373px"></div>
<div class="t" style="left:1134px;top:373px;font-size:12px;color:#262626">无线条(<u>N</u>)</div>
<div class="radio" style="left:1117.5px;top:398px"></div>
<div class="t" style="left:1134px;top:398px;font-size:12px;color:#262626">实线(<u>S</u>)</div>
<div class="radio" style="left:1117.5px;top:423px"></div>
<div class="t" style="left:1134px;top:423px;font-size:12px;color:#262626">渐变线(<u>G</u>)</div>
<div class="radio" style="left:1117.5px;top:448px"></div>
<div class="t" style="left:1134px;top:448px;font-size:12px;color:#262626">自动(<u>U</u>)</div>
<div class="abs" style="left:1120.5px;top:401px;width:6px;height:6px;border-radius:50%;background:#6a6a6a"></div>
<div class="abs" style="left:1110px;top:470px;width:222px;height:1px;background:#dddddd"></div>
<div class="t" style="left:1127px;top:486px;font-size:12px;color:#262626">颜色(<u>C</u>)</div>
<div class="t" style="left:1127px;top:518px;font-size:12px;color:#262626">透明度(<u>T</u>)</div>
<div class="t" style="left:1127px;top:551px;font-size:12px;color:#262626">宽度(<u>W</u>)</div>
<div class="t" style="left:1127px;top:583px;font-size:12px;color:#262626">复合类型(<u>C</u>)</div>
<div class="t" style="left:1127px;top:616px;font-size:12px;color:#262626">短划线类型(<u>D</u>)</div>
<div class="t" style="left:1127px;top:647px;font-size:12px;color:#262626">线端类型(<u>A</u>)</div>
<div class="t" style="left:1127px;top:673px;font-size:12px;color:#262626">连接类型(<u>J</u>)</div>
<div class="pbtn" style="left:1288px;top:479px;width:44px;height:27px"></div>
<svg class="abs" style="left:1297px;top:482px" width="18" height="18" viewBox="0 0 18 18"><path d="M2.5 8.5L7.5 3.5 12.5 8.5 7.5 13.3z" fill="#fff" stroke="#444"/><path d="M7.5 6V3a1 1 0 0 1 1.9-.4" stroke="#444" fill="none" stroke-width="0.9"/><path d="M12 6c1.6-.4 3.2.8 3.6 2.4l-1.5 3.4-1.9-3z" fill="#3e6fb0"/><rect x="1" y="14.5" width="16" height="3" fill="#d6d6d6"/></svg>
<div class="caret" style="left:1319px;top:491px;border-left-width:4px;border-right-width:4px;border-top-width:4px"></div>
<div class="abs" style="left:1188px;top:519px;width:2px;height:9px;background:#555"></div>
<div class="abs" style="left:1190px;top:523px;width:33px;height:1px;background:#888"></div>
<div class="pbtn" style="left:1229px;top:512px;width:103px;height:26px"></div>
<div class="t" style="left:1236px;top:518px;font-size:12px;color:#262626">0%</div>
<svg class="abs" style="left:1318px;top:515px" width="9" height="20" viewBox="0 0 9 20"><path d="M1 6l3.5-4 3.5 4zM1 14l3.5 4 3.5-4z" fill="#555"/></svg>
<div class="pbtn" style="left:1229px;top:544px;width:103px;height:27px;border-color:#4f8462"></div>
<div class="t" style="left:1236px;top:550px;font-size:12px;color:#262626">2 磅</div>
<svg class="abs" style="left:1318px;top:547px" width="9" height="20" viewBox="0 0 9 20"><path d="M1 6l3.5-4 3.5 4zM1 14l3.5 4 3.5-4z" fill="#555"/></svg>
<div class="pbtn" style="left:1288px;top:576px;width:44px;height:27px"></div>
<svg class="abs" style="left:1297px;top:582px" width="16" height="13" viewBox="0 0 16 13"><path d="M2.5 1.5h13.5" stroke="#3e6fb0" stroke-width="1.1"/><path d="M0 6h16M0 11h16" stroke="#3e6fb0" stroke-width="1.7"/></svg>
<div class="caret" style="left:1319px;top:588px;border-left-width:4px;border-right-width:4px;border-top-width:4px"></div>
<div class="pbtn" style="left:1288px;top:609px;width:44px;height:27px"></div>
<svg class="abs" style="left:1296px;top:616px" width="17" height="12" viewBox="0 0 17 12"><path d="M0 1.5h17" stroke="#555" stroke-width="1"/><path d="M0 5.5h17" stroke="#555" stroke-width="1" stroke-dasharray="1 1"/><path d="M0 10.5h17" stroke="#555" stroke-width="1" stroke-dasharray="2 1"/></svg>
<div class="caret" style="left:1319px;top:621px;border-left-width:4px;border-right-width:4px;border-top-width:4px"></div>
<div class="pbtn" style="left:1280px;top:642px;width:52px;height:23px"></div>
<div class="t" style="left:1287px;top:646px;font-size:12px;color:#262626">平</div>
<div class="caret" style="left:1319px;top:652px;border-left-width:4px;border-right-width:4px;border-top-width:4px"></div>
<div class="pbtn" style="left:1277px;top:666px;width:55px;height:25px"></div>
<div class="t" style="left:1284px;top:673px;font-size:12px;color:#262626">圆角</div>
<div class="caret" style="left:1319px;top:677px;border-left-width:4px;border-right-width:4px;border-top-width:4px"></div>
<div class="abs" style="left:1082px;top:686px;width:284px;height:18px;background:#e6e6e6"></div>
<div class="box" style="left:1336px;top:672px;width:15px;height:14px;border-color:#c6c6c6"></div>
<div class="caret" style="left:1340px;top:677px;border-top-width:4px"></div>
<div class="badge" style="left:563.5px;top:33px"><svg width="40" height="40" viewBox="0 0 40 40" style="position:absolute;left:0;top:0"><path d="M19.6 31.2V13.2c-1.6 1.4-3.3 2.4-5 3.1v-3.4c2.4-1 4.5-2.6 6-4.3h3.5v22.6z" fill="#fff"/></svg></div>
<div class="badge" style="left:220px;top:53px">2</div>
<div class="badge" style="left:1246.5px;top:557px">3</div>
<div class="badge" style="left:1252.5px;top:455.5px">4</div>
<svg class="abs" style="left:1198px;top:650px" width="46" height="52" viewBox="0 0 46 52"><path d="M22.9 5.9L39.9 14.8V36.9L22.5 47.3 5.5 36.9V15.5z" fill="#e9621b"/><path d="M5.5 36.9L22.5 47.3 39.9 36.9" fill="none" stroke="#c44a12" stroke-width="1"/><path d="M14.4 19.2L25.1 15.9 30.6 17.4V33.2L25.1 35.8 14.4 31.8z" fill="#fff8f0"/><path d="M18.5 21.5L24.4 19.6V32.9L18.5 31z" fill="#e9621b"/></svg>
<div class="t" style="left:1244px;top:659px;font-size:20px;font-weight:bold;color:#1f8ad6;letter-spacing:-0.3px">Office<span style="font-size:19px;letter-spacing:0;-webkit-text-stroke:0.7px #1f8ad6">教程网</span></div>
<div class="t" style="left:1243px;top:680px;font-size:14px;font-weight:bold;color:#e8641c;letter-spacing:-0.3px;-webkit-text-stroke:0.3px #e8641c">www.office26.com</div>
</body></html>
